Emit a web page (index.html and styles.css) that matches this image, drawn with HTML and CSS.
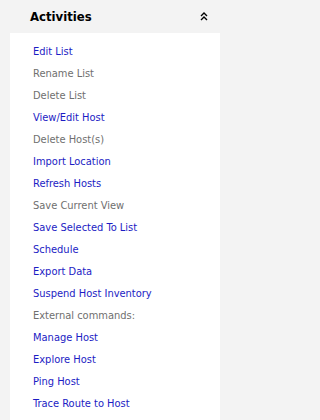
FILE: index.html
```html
<!DOCTYPE html>
<html>
<head>
<meta charset="utf-8">
<link rel="stylesheet" href="styles.css">
</head>
<body>
<div class="sidebar">
  <div class="header">
    <span class="title">Activities</span>
    <svg class="collapse" width="8" height="9" viewBox="0 0 8 9">
      <path d="M1 4 L4 1 L7 4 M1 8 L4 5 L7 8" fill="none" stroke="#000" stroke-width="1.4"/>
    </svg>
  </div>
  <div class="panel">
    <ul class="menu">
      <li class="link">Edit List</li>
      <li class="off">Rename List</li>
      <li class="off">Delete List</li>
      <li class="link">View/Edit Host</li>
      <li class="off">Delete Host(s)</li>
      <li class="link">Import Location</li>
      <li class="link">Refresh Hosts</li>
      <li class="off">Save Current View</li>
      <li class="link">Save Selected To List</li>
      <li class="link">Schedule</li>
      <li class="link">Export Data</li>
      <li class="link">Suspend Host Inventory</li>
      <li class="off">External commands:</li>
      <li class="link">Manage Host</li>
      <li class="link">Explore Host</li>
      <li class="link">Ping Host</li>
      <li class="link">Trace Route to Host</li>
    </ul>
  </div>
</div>
</body>
</html>
```
FILE: styles.css
```css
html, body {
  margin: 0;
  padding: 0;
  background: #f3f3f3;
  height: 100%;
  overflow: hidden;
}
body {
  font-family: "DejaVu Sans Condensed", "DejaVu Sans", sans-serif;
}
.sidebar {
  width: 230px;
  height: 420px;
}
.header {
  height: 33px;
  display: flex;
  align-items: center;
  justify-content: space-between;
  padding: 0 22px 0 30px;
  box-sizing: border-box;
}
.title {
  font-weight: bold;
  font-size: 13px;
  color: #000;
}
.collapse {
  display: block;
}
.panel {
  margin-left: 10px;
  width: 210px;
  background: #fff;
  height: 387px;
  padding-top: 8px;
  box-sizing: border-box;
}
.menu {
  list-style: none;
  margin: 0;
  padding: 0 0 0 23px;
}
.menu li {
  height: 22px;
  line-height: 22px;
  font-size: 11px;
  white-space: nowrap;
}
.link { color: #1c1cc4; }
.off { color: #6f6f6f; }
```
